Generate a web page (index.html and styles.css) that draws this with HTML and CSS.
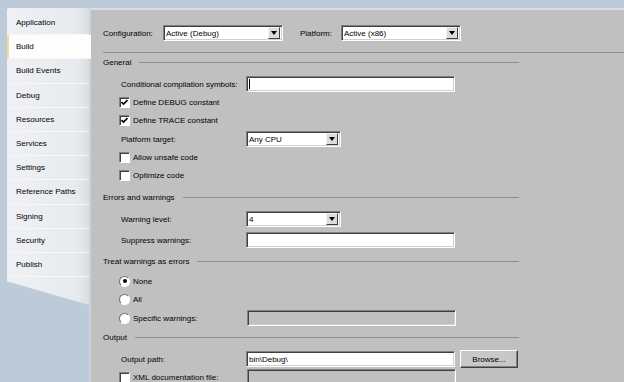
FILE: index.html
```html
<!DOCTYPE html>
<html lang="en">
<head>
    <meta charset="UTF-8">
    <title>Project Properties - Build</title>
    <link rel="stylesheet" href="styles.css">
</head>
<body>
    <div class="window">
        <nav class="tabs">
            <div class="tab">Application</div>
            <div class="tab active">Build</div>
            <div class="tab">Build Events</div>
            <div class="tab">Debug</div>
            <div class="tab">Resources</div>
            <div class="tab">Services</div>
            <div class="tab">Settings</div>
            <div class="tab">Reference Paths</div>
            <div class="tab">Signing</div>
            <div class="tab">Security</div>
            <div class="tab">Publish</div>
            <div class="tab-end"></div>
        </nav>

        <main class="panel">
            <div class="toolbar">
                <span class="toolbar-label">Configuration:</span>
                <div class="combo combo-wide"><span class="combo-text">Active (Debug)</span><span class="combo-btn"><i class="arrow"></i></span></div>
                <span class="toolbar-label platform-label">Platform:</span>
                <div class="combo combo-wide"><span class="combo-text">Active (x86)</span><span class="combo-btn"><i class="arrow"></i></span></div>
            </div>
            <div class="rule"></div>

            <div class="group-title first"><span>General</span></div>
            <div class="row field">
                <span class="label">Conditional compilation symbols:</span>
                <div class="textbox"><span class="caret"></span></div>
            </div>
            <div class="row check">
                <span class="checkbox checked"><svg width="7" height="7" viewBox="0 0 7 7"><polyline points="0.5,3 2.5,5 6.5,1" fill="none" stroke="#000" stroke-width="1.6"/></svg></span>
                <span>Define DEBUG constant</span>
            </div>
            <div class="row check">
                <span class="checkbox checked"><svg width="7" height="7" viewBox="0 0 7 7"><polyline points="0.5,3 2.5,5 6.5,1" fill="none" stroke="#000" stroke-width="1.6"/></svg></span>
                <span>Define TRACE constant</span>
            </div>
            <div class="row field">
                <span class="label">Platform target:</span>
                <div class="combo combo-small"><span class="combo-text">Any CPU</span><span class="combo-btn"><i class="arrow"></i></span></div>
            </div>
            <div class="row check">
                <span class="checkbox"></span>
                <span>Allow unsafe code</span>
            </div>
            <div class="row check">
                <span class="checkbox"></span>
                <span>Optimize code</span>
            </div>

            <div class="group-title"><span>Errors and warnings</span></div>
            <div class="row field">
                <span class="label">Warning level:</span>
                <div class="combo combo-small"><span class="combo-text">4</span><span class="combo-btn"><i class="arrow"></i></span></div>
            </div>
            <div class="row field">
                <span class="label">Suppress warnings:</span>
                <div class="textbox"></div>
            </div>

            <div class="group-title"><span>Treat warnings as errors</span></div>
            <div class="row check">
                <span class="radio selected"></span>
                <span>None</span>
            </div>
            <div class="row check">
                <span class="radio"></span>
                <span>All</span>
            </div>
            <div class="row field radio-field">
                <span class="radio"></span>
                <span class="radio-label">Specific warnings:</span>
                <div class="textbox disabled"></div>
            </div>

            <div class="group-title tight"><span>Output</span></div>
            <div class="row field">
                <span class="label">Output path:</span>
                <div class="textbox"><span class="textbox-text">bin\Debug\</span></div>
                <button class="browse">Browse...</button>
            </div>
            <div class="row field check-field">
                <span class="checkbox"></span>
                <span class="radio-label">XML documentation file:</span>
                <div class="textbox disabled"></div>
            </div>
        </main>
    </div>
</body>
</html>
```

FILE: styles.css
```css
body {
    margin: 0;
    height: 382px;
    overflow: hidden;
    background-color: #bdcbd9;
    font-family: "Liberation Sans", Arial, sans-serif;
    font-size: 8px;
    color: #000;
}

.window {
    display: flex;
    height: 382px;
    padding: 8px 0 0 7px;
    box-sizing: border-box;
}

/* left tab strip */
.tabs {
    width: 82px;
    flex-shrink: 0;
    display: flex;
    flex-direction: column;
    padding-top: 3px;
    border-right: 2px solid #cbd4de;
}

.tab {
    height: 24.2px;
    flex-shrink: 0;
    box-sizing: border-box;
    padding-left: 9px;
    display: flex;
    align-items: center;
    background: linear-gradient(to right, #eff1f4, #e7eaee 85%, #d9dde3);
    border-bottom: 1px solid #f6f7f9;
}

.tab:first-child {
    margin-top: -3px;
    height: 27.2px;
    padding-top: 3px;
    border-top-left-radius: 2px;
}

.tab.active {
    background-color: #fdfdfd;
    background-image: none;
    border-left: 2px solid #f0dc9c;
    padding-left: 7px;
    margin-right: -2px;
}

.tab-end {
    height: 28px;
    flex-shrink: 0;
    background: linear-gradient(to right, #eff1f4, #e7eaee 85%, #d9dde3);
    clip-path: polygon(0 0, 100% 0, 100% 100%, 0 15%);
}

/* right property page */
.panel {
    flex: 1;
    display: flex;
    flex-direction: column;
    background-color: #c0c0c0;
    border-top: 2px solid #d9dfe7;
    padding-left: 12px;
}

.panel > * {
    flex-shrink: 0;
}

.toolbar {
    display: flex;
    align-items: center;
    height: 16px;
    margin-top: 15px;
}

.toolbar-label {
    width: 60px;
}

.platform-label {
    width: 41px;
    margin-left: 17px;
}

.rule {
    height: 1px;
    margin-top: 11px;
    background-color: #8e8e8e;
}

.group-title {
    display: flex;
    align-items: center;
    width: 416px;
    height: 14px;
    margin-top: 6px;
}

.group-title.first {
    margin-top: 2px;
}

.group-title.tight {
    margin-top: 4px;
}

.group-title::after {
    content: "";
    flex: 1;
    height: 1px;
    margin-left: 8px;
    background-color: #8e8e8e;
}

.row {
    display: flex;
    align-items: center;
    margin-left: 16px;
}

.row.check {
    height: 18px;
}

.row.field {
    height: 16px;
    margin-top: 2px;
}

.group-title + .row.field {
    margin-top: 7px;
}

.group-title + .row.check {
    margin-top: 4px;
}

.row.field + .row.field {
    margin-top: 5px;
}

.row.field + .row.check {
    margin-top: 1px;
}

.row.field + .row.check-field {
    margin-top: 2px;
}

.label {
    width: 125px;
    margin-left: 2px;
}

.radio-label {
    width: 114px;
}

/* controls */
.textbox,
.combo {
    height: 16px;
    box-sizing: border-box;
    background-color: #fff;
    border: 1px solid;
    border-color: #808080 #fff #fff #808080;
    box-shadow: inset 1px 1px 0 #404040, inset -1px -1px 0 #d4d0c8;
}

.textbox {
    width: 209px;
    display: flex;
    align-items: center;
    padding-left: 2px;
}

.textbox.disabled {
    background-color: #c0c0c0;
}

.caret {
    width: 1px;
    height: 10px;
    background-color: #000;
}

.combo {
    display: flex;
    align-items: center;
    padding: 2px;
}

.combo-wide {
    width: 120px;
}

.combo-small {
    width: 95px;
}

.combo-text {
    flex: 1;
}

.combo-btn {
    width: 12px;
    height: 12px;
    box-sizing: border-box;
    display: flex;
    align-items: center;
    justify-content: center;
    background-color: #dcdcdc;
    border: 1px solid;
    border-color: #f4f4f4 #404040 #404040 #f4f4f4;
}

.arrow {
    width: 0;
    height: 0;
    border-left: 3.5px solid transparent;
    border-right: 3.5px solid transparent;
    border-top: 4px solid #000;
}

.checkbox {
    width: 11px;
    height: 11px;
    box-sizing: border-box;
    margin-right: 3px;
    display: flex;
    align-items: center;
    justify-content: center;
    background-color: #fff;
    border: 1px solid;
    border-color: #808080 #fff #fff #808080;
    box-shadow: inset 1px 1px 0 #404040;
}

.radio {
    width: 11px;
    height: 11px;
    box-sizing: border-box;
    margin-right: 3px;
    border-radius: 50%;
    display: flex;
    align-items: center;
    justify-content: center;
    background-color: #fff;
    border: 1px solid;
    border-color: #707070 #fff #fff #707070;
}

.radio.selected::after {
    content: "";
    width: 4px;
    height: 4px;
    border-radius: 50%;
    background-color: #000;
}

.browse {
    width: 58px;
    height: 18px;
    margin-left: 5px;
    padding: 0;
    font-family: inherit;
    font-size: 8px;
    color: #000;
    background-color: #c8c8c8;
    border: 1px solid;
    border-color: #fff #404040 #404040 #fff;
    box-shadow: inset -1px -1px 0 #808080;
}
```
